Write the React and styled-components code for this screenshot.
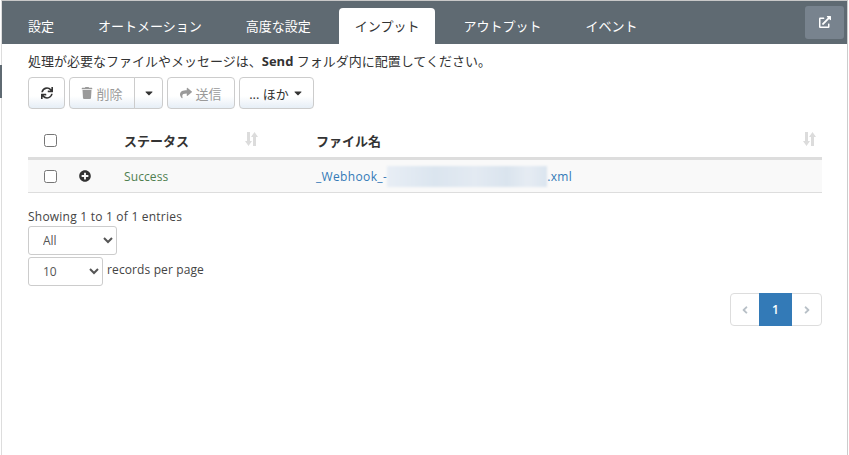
import React from 'react'
import styled, { createGlobalStyle } from 'styled-components'
import { FaSync, FaTrash, FaCaretDown, FaShare, FaExternalLinkAlt, FaPlusCircle, FaAngleLeft, FaAngleRight } from 'react-icons/fa'

const Global = createGlobalStyle`
  html, body { margin: 0; padding: 0; background: #fff; }
  body {
    font-family: "Open Sans", "Noto Sans CJK JP", sans-serif;
    font-size: 12px;
    color: #333;
  }
`

const Page = styled.div`
  position: relative;
  width: 849px;
  height: 455px;
  overflow: hidden;
  box-sizing: border-box;
  padding: 0 1px 0 1px;
`

const SideMark = styled.div`
  position: absolute;
  left: 0;
  top: 65px;
  width: 2px;
  height: 33px;
  background: #5f6a72;
`

const Frame = styled.div`
  height: 100%;
  box-sizing: border-box;
  border-top: 1px solid #c8c8c8;
  border-left: 1px solid #ddd;
  border-right: 1px solid #ccc;
`

const Header = styled.div`
  position: relative;
  display: flex;
  align-items: flex-end;
  gap: 12px;
  height: 43px;
  padding-left: 10px;
  background: #5f6a72;
`

const Tab = styled.div`
  height: 36px;
  padding: 0 16px;
  line-height: 37px;
  font-size: 13px;
  color: ${p => (p.$active ? '#333' : '#fff')};
  background: ${p => (p.$active ? '#fff' : 'transparent')};
  border-radius: 4px 4px 0 0;
`

const PopOut = styled.button`
  position: absolute;
  right: 3px;
  top: 5px;
  width: 39px;
  height: 33px;
  border: 0;
  padding: 0 0 2px;
  border-radius: 3px;
  background: #78838e;
  color: #fff;
  font-size: 12px;
  display: flex;
  align-items: center;
  justify-content: center;
`

const Content = styled.div`
  padding: 0 25px 0 26px;
`

const Notice = styled.p`
  margin: 0;
  height: 33px;
  line-height: 35px;
  font-size: 13px;
  b { font-weight: 700; }
`

const Toolbar = styled.div`
  display: flex;
  gap: 4px;
  height: 32px;
`

const Group = styled.div`
  display: flex;
`

const Btn = styled.button`
  display: flex;
  align-items: center;
  justify-content: center;
  gap: 3px;
  height: 32px;
  width: ${p => p.$w}px;
  box-sizing: border-box;
  padding: 0;
  font-family: inherit;
  font-size: 13px;
  color: ${p => (p.$off ? '#9a9a9a' : '#333')};
  background: linear-gradient(to bottom, #fff 0%, #fff 60%, #e6eef6 100%);
  border: 1px solid #ccc;
  border-radius: ${p => p.$radius || '4px'};
  ${p => p.$joined && 'margin-left: -1px;'}
  svg { font-size: 12px; }
`

const Table = styled.div`
  margin-top: 14px;
`

const HeadRow = styled.div`
  display: grid;
  grid-template-columns: 96px 192px 1fr;
  height: 34px;
  align-items: center;
  border-bottom: 3px solid #ddd;
  font-size: 13px;
  font-weight: 700;
`

const BodyRow = styled.div`
  display: grid;
  grid-template-columns: 96px 192px 1fr;
  height: 32px;
  align-items: center;
  background: #f9f9f9;
  border-bottom: 1px solid #ddd;
`

const SelectCell = styled.div`
  display: flex;
  align-items: center;
  padding-left: 16px;
  gap: 22px;
`

const Check = styled.input.attrs({ type: 'checkbox' })`
  width: 13px;
  height: 13px;
  margin: 0;
`

const Plus = styled(FaPlusCircle)`
  font-size: 12px;
  color: #333;
`

const SortCell = styled.div`
  position: relative;
  height: 100%;
  display: flex;
  align-items: center;
`

const SortIcon = styled.svg`
  position: absolute;
  right: ${p => p.$right}px;
  top: 9px;
  width: 13px;
  height: 14px;
  fill: #dcdcdc;
`

const Status = styled.span`
  color: #4f7f50;
  letter-spacing: 0.1px;
`

const FileLink = styled.a`
  display: flex;
  align-items: center;
  color: #337ab7;
  letter-spacing: 0.35px;
`

const Redacted = styled.span`
  display: inline-block;
  width: 160px;
  height: 21px;
  background: linear-gradient(to right, #e8eef5 0%, #dbe5ef 30%, #e3eaf2 55%, #dae4ee 75%, #e6ecf3 88%, #dbe5ef 100%);
  filter: blur(1px);
`

const Info = styled.div`
  margin-top: 15px;
  height: 18px;
  line-height: 18px;
  letter-spacing: 0.22px;
  color: #444;
`

const Select = styled.select`
  display: block;
  width: ${p => p.$w}px;
  height: 29px;
  box-sizing: border-box;
  padding: 0 0 0 10px;
  font-family: inherit;
  font-size: 12px;
  color: #555;
  background: #fff;
  border: 1px solid #ccc;
  border-radius: 3px;
`

const LengthRow = styled.div`
  display: flex;
  align-items: center;
  gap: 4px;
  margin-top: 2px;
  letter-spacing: 0.12px;
  color: #444;
`

const LengthLabel = styled.span`
  padding-bottom: 4px;
`

const PagerRow = styled.div`
  display: flex;
  justify-content: flex-end;
  margin-top: 7px;
`

const Pager = styled.div`
  display: flex;
  height: 33px;
  box-sizing: border-box;
  border: 1px solid #ddd;
  border-radius: 4px;
`

const PageItem = styled.div`
  display: flex;
  align-items: center;
  justify-content: center;
  width: ${p => p.$w}px;
  margin: ${p => (p.$active ? '-1px 0' : '0')};
  font-weight: ${p => (p.$active ? 600 : 400)};
  font-size: 12px;
  color: ${p => (p.$active ? '#fff' : '#b8c0c7')};
  background: ${p => (p.$active ? '#337ab7' : 'transparent')};
`

const SortGlyph = ({ right }) => (
  <SortIcon $right={right} viewBox="0 0 13 14">
    <path d="M2 0h3v9h2L3.5 14 0 9h2zM8 5h-2l3.5-5L13 5h-2v9H8z" />
  </SortIcon>
)

export default function App() {
  return (
    <Page>
      <Global />
      <SideMark />
      <Frame>
        <Header>
          <Tab>設定</Tab>
          <Tab>オートメーション</Tab>
          <Tab>高度な設定</Tab>
          <Tab $active>インプット</Tab>
          <Tab>アウトプット</Tab>
          <Tab>イベント</Tab>
          <PopOut><FaExternalLinkAlt /></PopOut>
        </Header>
        <Content>
          <Notice>処理が必要なファイルやメッセージは、<b>Send</b> フォルダ内に配置してください。</Notice>
          <Toolbar>
            <Btn $w={37}><FaSync /></Btn>
            <Group>
              <Btn $w={66} $off $radius="4px 0 0 4px"><FaTrash />削除</Btn>
              <Btn $w={29} $joined $radius="0 4px 4px 0"><FaCaretDown /></Btn>
            </Group>
            <Btn $w={68} $off><FaShare />送信</Btn>
            <Btn $w={75}>... ほか<FaCaretDown /></Btn>
          </Toolbar>
          <Table>
            <HeadRow>
              <SelectCell><Check /></SelectCell>
              <SortCell>ステータス<SortGlyph right={58} /></SortCell>
              <SortCell>ファイル名<SortGlyph right={6} /></SortCell>
            </HeadRow>
            <BodyRow>
              <SelectCell><Check /><Plus /></SelectCell>
              <Status>Success</Status>
              <FileLink>_Webhook_-<Redacted />.xml</FileLink>
            </BodyRow>
          </Table>
          <Info>Showing 1 to 1 of 1 entries</Info>
          <Select $w={89}><option>All</option></Select>
          <LengthRow>
            <Select $w={75}><option>10</option></Select>
            <LengthLabel>records per page</LengthLabel>
          </LengthRow>
          <PagerRow>
            <Pager>
              <PageItem $w={28}><FaAngleLeft /></PageItem>
              <PageItem $w={33} $active>1</PageItem>
              <PageItem $w={29}><FaAngleRight /></PageItem>
            </Pager>
          </PagerRow>
        </Content>
      </Frame>
    </Page>
  )
}
